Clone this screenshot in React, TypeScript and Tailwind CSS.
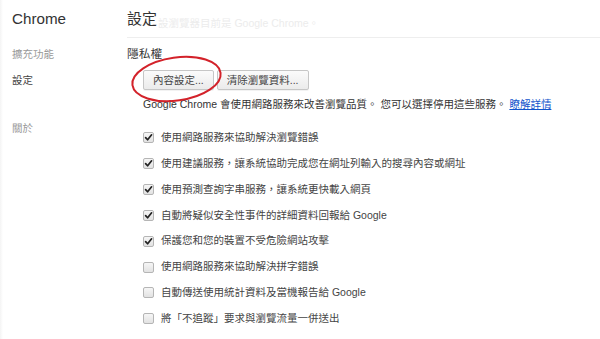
import React from 'react';

const font = { fontFamily: '"Liberation Sans", "Noto Sans CJK TC", sans-serif' };

const options: { label: string; checked: boolean }[] = [
  { label: '使用網路服務來協助解決瀏覽錯誤', checked: true },
  { label: '使用建議服務，讓系統協助完成您在網址列輸入的搜尋內容或網址', checked: true },
  { label: '使用預測查詢字串服務，讓系統更快載入網頁', checked: true },
  { label: '自動將疑似安全性事件的詳細資料回報給 Google', checked: true },
  { label: '保護您和您的裝置不受危險網站攻擊', checked: true },
  { label: '使用網路服務來協助解決拼字錯誤', checked: false },
  { label: '自動傳送使用統計資料及當機報告給 Google', checked: false },
  { label: '將「不追蹤」要求與瀏覽流量一併送出', checked: false },
];

const Checkbox = ({ checked }: { checked: boolean }) => (
  <span className="w-[11px] h-[11px] rounded-[2px] border border-[#b5b5b5] bg-gradient-to-b from-[#f6f6f6] to-[#e2e2e2] flex items-center justify-center shrink-0">
    {checked && (
      <svg width="9" height="9" viewBox="0 0 9 9">
        <path d="M1.6 4.6 L3.6 6.8 L7.6 1.8" fill="none" stroke="#222" strokeWidth="1.7" strokeLinecap="round" strokeLinejoin="round" />
      </svg>
    )}
  </span>
);

const Btn = ({ children }: { children: React.ReactNode }) => (
  <button className="h-[20px] px-[9px] rounded-[2px] border border-[#c6c6c6] bg-gradient-to-b from-[#fbfbfb] to-[#ebebeb] text-[10.5px] text-[#444] leading-none shadow-[0_1px_0_rgba(0,0,0,0.05)]">
    {children}
  </button>
);

export default function App() {
  return (
    <div className="relative w-[600px] h-[339px] bg-white overflow-hidden text-[#333]" style={font}>
      <div className="flex h-full">
        {/* sidebar */}
        <div className="w-[127px] shrink-0 pl-[12px] bg-gradient-to-r from-[#f4f4f4] via-white to-white bg-[length:6px_100%] bg-no-repeat">
          <div className="h-[38px] flex items-center text-[15.2px] text-[#333]">Chrome</div>
          <div className="mt-[9px] leading-[14px] text-[10.5px] text-[#999]">擴充功能</div>
          <div className="mt-[12px] leading-[14px] text-[10.5px] text-[#444]">設定</div>
          <div className="mt-[34px] leading-[14px] text-[10.5px] text-[#999]">關於</div>
        </div>

        {/* main */}
        <div className="flex-1 min-w-0">
          <div className="h-[38px] border-b border-[#eeeeee] flex items-center">
            <h1 className="text-[15px] font-normal text-[#333] leading-[20px]">設定</h1>
            <span className="ml-[1px] mt-[9px] leading-[14px] text-[10.5px] text-[#ececec] whitespace-nowrap">
              設瀏覽器目前是 Google Chrome。
            </span>
          </div>

          <div className="mt-[9px] leading-[14px] text-[11.7px] text-[#333]">隱私權</div>

          <div className="pl-[16px]">
            <div className="mt-[9px] flex gap-[3px]">
              <Btn>內容設定...</Btn>
              <Btn>清除瀏覽資料...</Btn>
            </div>

            <div className="mt-[7px] leading-[14px] text-[10.5px] text-[#333] whitespace-nowrap">
              Google Chrome 會使用網路服務來改善瀏覽品質。 您可以選擇停用這些服務。{' '}
              <a className="text-[#1155cc] underline">瞭解詳情</a>
            </div>

            <div className="mt-[14px] flex flex-col">
              {options.map((o) => (
                <label key={o.label} className="h-[25.85px] flex items-center gap-[7px] text-[10.5px] text-[#444] whitespace-nowrap">
                  <Checkbox checked={o.checked} />
                  <span>{o.label}</span>
                </label>
              ))}
            </div>
          </div>
        </div>
      </div>

      {/* red annotation ellipse */}
      <svg className="absolute left-0 top-0 pointer-events-none" width="600" height="339">
        <ellipse cx="176.5" cy="79" rx="44.5" ry="21.5" transform="rotate(-8 176.5 79)" fill="none" stroke="#d3222a" strokeWidth="2" />
      </svg>
    </div>
  );
}
